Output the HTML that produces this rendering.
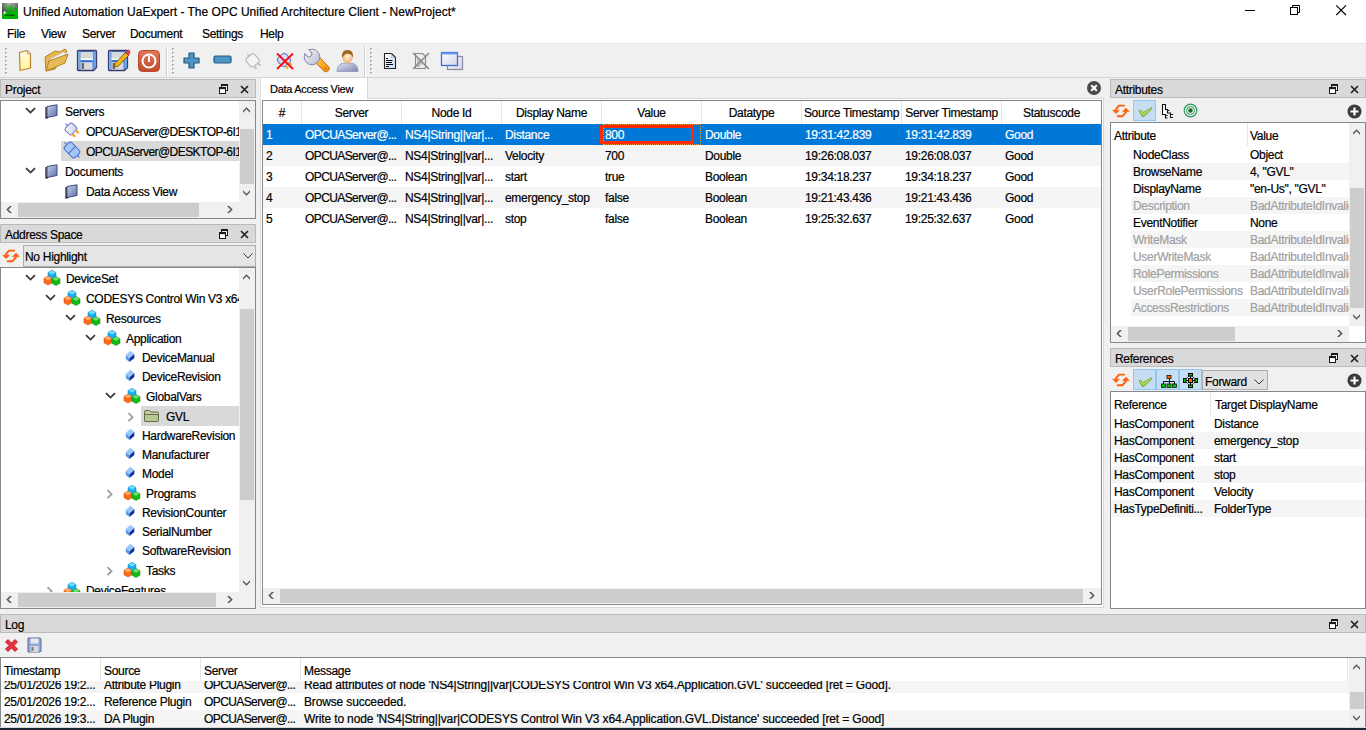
<!DOCTYPE html><html><head><meta charset="utf-8"><style>
*{box-sizing:border-box}
body{margin:0;width:1366px;height:730px;position:relative;overflow:hidden;background:#f0f0f0;font-family:"Liberation Sans",sans-serif;font-size:11px;color:#000}
.a{position:absolute}
.t{position:absolute;white-space:pre;line-height:13px;font-size:12px;letter-spacing:-0.3px;-webkit-text-stroke-width:0.2px}
svg.a{overflow:visible}
</style></head><body>
<div class="a" style="left:0px;top:0px;width:1366px;height:43px;background:#fff"></div>
<div class="a" style="left:0px;top:43px;width:1366px;height:1px;background:#e6e6e6"></div>
<svg class="a" style="left:2px;top:3px;" width="16" height="16" viewBox="0 0 16 16"><defs><radialGradient id="ig" cx="0.5" cy="0.1" r="0.7"><stop offset="0" stop-color="#b8b8b8"/><stop offset="1" stop-color="#4a4a4a"/></radialGradient><radialGradient id="gl" cx="0.5" cy="0.5" r="0.5"><stop offset="0" stop-color="#fff"/><stop offset="1" stop-color="#fff" stop-opacity="0"/></radialGradient></defs><rect x="0" y="0" width="16" height="16" rx="1" fill="#02b402"/><path d="M1 0H15Q16 0 16 1V2.5Q14 8 7 8.5Q2 9 0 12V1Q0 0 1 0Z" fill="url(#ig)"/><path d="M4.2 2.2V6Q4.2 7.6 5.8 7.6Q7.4 7.6 7.4 6V2.2M7.6 7.6L9.6 2.2L11.6 7.6M8.4 5.8H10.8" fill="none" stroke="#0cc00c" stroke-width="1.1"/><circle cx="2.6" cy="9.6" r="2.2" fill="url(#gl)"/><path d="M3 12.3H12.5" stroke="#0a400a" stroke-width="1.4" stroke-dasharray="1.2 0.5"/></svg>
<div class="t" style="left:23px;top:6px;letter-spacing:0">Unified Automation UaExpert - The OPC Unified Architecture Client - NewProject*</div>
<div class="a" style="left:1245px;top:10px;width:10px;height:1px;background:#000"></div>
<svg class="a" style="left:1290px;top:5px;" width="11" height="11" viewBox="0 0 11 11"><rect x="0.5" y="2.5" width="7" height="7" fill="none" stroke="#000"/><path d="M2.5 2.5V0.5H9.5V7.5H7.5" fill="none" stroke="#000"/></svg>
<svg class="a" style="left:1336px;top:5px;" width="11" height="11" viewBox="0 0 11 11"><path d="M0.3 0.3L10 10M10 0.3L0.3 10" stroke="#000" stroke-width="1.1"/></svg>
<div class="t" style="left:7px;top:28px;">File</div>
<div class="t" style="left:41px;top:28px;">View</div>
<div class="t" style="left:82px;top:28px;">Server</div>
<div class="t" style="left:130px;top:28px;">Document</div>
<div class="t" style="left:202px;top:28px;">Settings</div>
<div class="t" style="left:260px;top:28px;">Help</div>
<div class="a" style="left:0px;top:77px;width:1366px;height:1px;background:#d5d5d5"></div>
<div class="a" style="left:5px;top:48px;width:2px;height:2px;background:#a8a8a8"></div>
<div class="a" style="left:6px;top:49px;width:1px;height:1px;background:#fff"></div>
<div class="a" style="left:5px;top:52px;width:2px;height:2px;background:#a8a8a8"></div>
<div class="a" style="left:6px;top:53px;width:1px;height:1px;background:#fff"></div>
<div class="a" style="left:5px;top:56px;width:2px;height:2px;background:#a8a8a8"></div>
<div class="a" style="left:6px;top:57px;width:1px;height:1px;background:#fff"></div>
<div class="a" style="left:5px;top:60px;width:2px;height:2px;background:#a8a8a8"></div>
<div class="a" style="left:6px;top:61px;width:1px;height:1px;background:#fff"></div>
<div class="a" style="left:5px;top:64px;width:2px;height:2px;background:#a8a8a8"></div>
<div class="a" style="left:6px;top:65px;width:1px;height:1px;background:#fff"></div>
<div class="a" style="left:5px;top:68px;width:2px;height:2px;background:#a8a8a8"></div>
<div class="a" style="left:6px;top:69px;width:1px;height:1px;background:#fff"></div>
<div class="a" style="left:5px;top:72px;width:2px;height:2px;background:#a8a8a8"></div>
<div class="a" style="left:6px;top:73px;width:1px;height:1px;background:#fff"></div>
<div class="a" style="left:172px;top:48px;width:2px;height:2px;background:#a8a8a8"></div>
<div class="a" style="left:173px;top:49px;width:1px;height:1px;background:#fff"></div>
<div class="a" style="left:172px;top:52px;width:2px;height:2px;background:#a8a8a8"></div>
<div class="a" style="left:173px;top:53px;width:1px;height:1px;background:#fff"></div>
<div class="a" style="left:172px;top:56px;width:2px;height:2px;background:#a8a8a8"></div>
<div class="a" style="left:173px;top:57px;width:1px;height:1px;background:#fff"></div>
<div class="a" style="left:172px;top:60px;width:2px;height:2px;background:#a8a8a8"></div>
<div class="a" style="left:173px;top:61px;width:1px;height:1px;background:#fff"></div>
<div class="a" style="left:172px;top:64px;width:2px;height:2px;background:#a8a8a8"></div>
<div class="a" style="left:173px;top:65px;width:1px;height:1px;background:#fff"></div>
<div class="a" style="left:172px;top:68px;width:2px;height:2px;background:#a8a8a8"></div>
<div class="a" style="left:173px;top:69px;width:1px;height:1px;background:#fff"></div>
<div class="a" style="left:172px;top:72px;width:2px;height:2px;background:#a8a8a8"></div>
<div class="a" style="left:173px;top:73px;width:1px;height:1px;background:#fff"></div>
<div class="a" style="left:370px;top:48px;width:2px;height:2px;background:#a8a8a8"></div>
<div class="a" style="left:371px;top:49px;width:1px;height:1px;background:#fff"></div>
<div class="a" style="left:370px;top:52px;width:2px;height:2px;background:#a8a8a8"></div>
<div class="a" style="left:371px;top:53px;width:1px;height:1px;background:#fff"></div>
<div class="a" style="left:370px;top:56px;width:2px;height:2px;background:#a8a8a8"></div>
<div class="a" style="left:371px;top:57px;width:1px;height:1px;background:#fff"></div>
<div class="a" style="left:370px;top:60px;width:2px;height:2px;background:#a8a8a8"></div>
<div class="a" style="left:371px;top:61px;width:1px;height:1px;background:#fff"></div>
<div class="a" style="left:370px;top:64px;width:2px;height:2px;background:#a8a8a8"></div>
<div class="a" style="left:371px;top:65px;width:1px;height:1px;background:#fff"></div>
<div class="a" style="left:370px;top:68px;width:2px;height:2px;background:#a8a8a8"></div>
<div class="a" style="left:371px;top:69px;width:1px;height:1px;background:#fff"></div>
<div class="a" style="left:370px;top:72px;width:2px;height:2px;background:#a8a8a8"></div>
<div class="a" style="left:371px;top:73px;width:1px;height:1px;background:#fff"></div>
<div class="a" style="left:166px;top:46px;width:1px;height:31px;background:#d0d0d0"></div>
<div class="a" style="left:167px;top:46px;width:1px;height:31px;background:#fff"></div>
<div class="a" style="left:364px;top:46px;width:1px;height:31px;background:#d0d0d0"></div>
<div class="a" style="left:365px;top:46px;width:1px;height:31px;background:#fff"></div>
<svg class="a" style="left:18px;top:49px;" width="14" height="23" viewBox="0 0 14 23"><defs><linearGradient id="nd" x1="0" y1="0" x2="0" y2="1"><stop offset="0" stop-color="#fffbe0"/><stop offset="1" stop-color="#fff49a"/></linearGradient></defs><path d="M1.5 3.5L9 1.5L12.5 5V19L2 21.5Z" fill="url(#nd)" stroke="#b8862c" stroke-width="1.2" stroke-linejoin="round"/><path d="M9 1.5L9.5 5L12.5 5" fill="#ddd" stroke="#999" stroke-width="0.8"/></svg>
<svg class="a" style="left:43px;top:48px;" width="26" height="25" viewBox="0 0 26 25"><path d="M2 9L12 3L17 4L22 1L24 3L12 21L3 23Z" fill="#e9b64a" stroke="#b5832a" stroke-width="1"/><path d="M7 11L21 4L23 6L11 18Z" fill="#f2f2f6" stroke="#c9c9cf" stroke-width="0.8"/><path d="M3 23L6 13L25 6L22 15Z" fill="#e7bb55" stroke="#b5832a" stroke-width="1" stroke-linejoin="round"/></svg>
<svg class="a" style="left:76px;top:49px;" width="22" height="24" viewBox="0 0 22 24"><defs><linearGradient id="fl" x1="0" y1="0" x2="1" y2="0"><stop offset="0" stop-color="#a8d4ff"/><stop offset="0.25" stop-color="#2a6ac8"/><stop offset="0.75" stop-color="#3a7ad8"/><stop offset="1" stop-color="#8ac0f8"/></linearGradient></defs><path d="M1.5 2.5Q1.5 1.5 2.5 1.5H19.5Q20.5 1.5 20.5 2.5V18.5L17.5 21.5H2.5Q1.5 21.5 1.5 20.5Z" fill="url(#fl)" stroke="#3c3c6e" stroke-width="1.3"/><rect x="4.5" y="3" width="12.5" height="7" fill="#d8d8d8"/><rect x="4.5" y="9.5" width="12.5" height="1.6" fill="#fff"/><rect x="4.5" y="13.2" width="12" height="7.5" fill="#dadada"/><rect x="5.6" y="14" width="2.4" height="6" fill="#6a6a6a"/></svg>
<svg class="a" style="left:107px;top:49px;" width="24" height="24" viewBox="0 0 24 24"><path d="M1.5 2.5Q1.5 1.5 2.5 1.5H19.5Q20.5 1.5 20.5 2.5V18.5L17.5 21.5H2.5Q1.5 21.5 1.5 20.5Z" fill="url(#fl)" stroke="#3c3c6e" stroke-width="1.3"/><rect x="4.5" y="3" width="12.5" height="7" fill="#d8d8d8"/><rect x="4.5" y="9.5" width="12.5" height="1.6" fill="#fff"/><rect x="4.5" y="13.2" width="12" height="7.5" fill="#dadada"/><rect x="5.6" y="14" width="2.4" height="6" fill="#6a6a6a"/><path d="M8 14.5L18.5 3.5L21.5 6.5L11 17.5L7.5 18Z" fill="#f2b418" stroke="#6a5010" stroke-width="0.8" stroke-linejoin="round"/><path d="M18.5 3.5L20.2 1.3Q21.3 0.6 22.5 1.6Q23.4 2.7 22.8 3.8L21.5 6.5Z" fill="#e84850" stroke="#8a2020" stroke-width="0.6"/></svg>
<svg class="a" style="left:138px;top:50px;" width="22" height="22" viewBox="0 0 22 22"><defs><linearGradient id="pw" x1="0" y1="0" x2="0" y2="1"><stop offset="0" stop-color="#e07a5a"/><stop offset="1" stop-color="#c04a2a"/></linearGradient></defs><rect x="0.5" y="0.5" width="21" height="21" rx="4" fill="url(#pw)" stroke="#b84a2a"/><circle cx="11" cy="11" r="6.5" fill="none" stroke="#fff" stroke-width="2"/><path d="M11 6V12" stroke="#fff" stroke-width="2"/></svg>
<svg class="a" style="left:183px;top:52px;" width="18" height="18" viewBox="0 0 18 18"><path d="M6 1H11V6H16V11H11V16H6V11H1V6H6Z" fill="#4f95c4" stroke="#1f5a85" stroke-width="1.2" stroke-linejoin="round"/></svg>
<svg class="a" style="left:213px;top:55px;" width="19" height="10" viewBox="0 0 19 10"><rect x="1" y="1" width="17" height="7" rx="1.5" fill="#4f95c4" stroke="#1f5a85" stroke-width="1.2"/></svg>
<svg class="a" style="left:245px;top:52px;" width="17" height="18" viewBox="0 0 17 18"><g transform="rotate(-40 8 8)"><rect x="2" y="2.5" width="11" height="11" rx="3" fill="#f4f4f4" stroke="#b8b8b8" stroke-width="1.2"/><path d="M5 13.5V17M10 13.5V17" stroke="#c0c0c0" stroke-width="2"/><path d="M7.5 2.5V0" stroke="#b8b8b8" stroke-width="1.2"/></g></svg>
<svg class="a" style="left:276px;top:52px;" width="18" height="18" viewBox="0 0 18 18"><g transform="rotate(-40 8 8)"><rect x="2.5" y="2.5" width="11" height="11" rx="3" fill="#d4dcfa" stroke="#6f80d0" stroke-width="1.1"/><path d="M5.5 13.5V17M10.5 13.5V17" stroke="#f0a828" stroke-width="2"/></g><path d="M1 1.5L17 17M17 1.5L1 17" stroke="#ff0a0a" stroke-width="1.8"/></svg>
<svg class="a" style="left:303px;top:48px;" width="27" height="26" viewBox="0 0 27 26"><defs><linearGradient id="wh" x1="0" y1="0" x2="1" y2="1"><stop offset="0" stop-color="#fafafe"/><stop offset="1" stop-color="#b8b8cc"/></linearGradient><linearGradient id="wo" x1="0" y1="0" x2="1" y2="1"><stop offset="0" stop-color="#ffd040"/><stop offset="1" stop-color="#f08a10"/></linearGradient></defs><path d="M11.5 13.5L21 23A3.2 3.2 0 0 0 25.5 18.5L16 9Z" fill="url(#wo)" stroke="#c87010" stroke-width="1"/><circle cx="22.3" cy="20.3" r="1.2" fill="#e07a10"/><circle cx="9" cy="9" r="7.8" fill="url(#wh)" stroke="#8a8aaa" stroke-width="1"/><g transform="rotate(-45 9 9)"><rect x="6.2" y="-2" width="5.6" height="9.5" rx="2.5" fill="#f0f0f0" stroke="#8a8aaa" stroke-width="1"/><rect x="5" y="-3" width="8" height="4" fill="#f0f0f0"/></g></svg>
<svg class="a" style="left:336px;top:49px;" width="23" height="24" viewBox="0 0 23 24"><defs><linearGradient id="ps" x1="0" y1="0" x2="1" y2="1"><stop offset="0" stop-color="#e4e6f4"/><stop offset="1" stop-color="#7c84b0"/></linearGradient><radialGradient id="fc" cx="0.5" cy="0.4" r="0.6"><stop offset="0" stop-color="#fff0d8"/><stop offset="1" stop-color="#f0b070"/></radialGradient></defs><path d="M1 22.5Q1 16 6 14.5L11.5 14L17 14.5Q22 16 22 22.5Z" fill="url(#ps)" stroke="#9096bc" stroke-width="0.8"/><ellipse cx="11.5" cy="8.5" rx="5" ry="6" fill="url(#fc)"/><path d="M6.2 9Q5 1 11.5 1Q18 1 16.8 9Q16 4.5 11 4.8Q8.5 5 6.2 9Z" fill="#a0681a"/></svg>
<svg class="a" style="left:383px;top:52px;" width="14" height="18" viewBox="0 0 14 18"><defs><linearGradient id="dc" x1="0" y1="0" x2="1" y2="1"><stop offset="0" stop-color="#ffffff"/><stop offset="1" stop-color="#c4d8ff"/></linearGradient></defs><path d="M1.5 1.5H8.5L12.5 5.5V16.5H1.5Z" fill="url(#dc)" stroke="#222" stroke-width="1.1" stroke-linejoin="round"/><path d="M8.5 1.5V5.5H12.5" fill="none" stroke="#9ab" stroke-width="0.6"/><path d="M3 6.5H5M3 8.5H9.5M3 10.5H9M3 12.5H10M3 14.5H6" stroke="#000" stroke-width="1"/></svg>
<svg class="a" style="left:412px;top:52px;" width="18" height="18" viewBox="0 0 18 18"><path d="M3.5 1.5H10.5L13.5 4.5V16.5H3.5Z" fill="#ececec" stroke="#8a8a8a" stroke-width="1.1"/><path d="M5 8H9M5 10H11M5 12H10M5 14H8" stroke="#999" stroke-width="1"/><path d="M1 1L17 17M17 1L1 17" stroke="#8c8c8c" stroke-width="1.7"/></svg>
<svg class="a" style="left:440px;top:51px;" width="24" height="21" viewBox="0 0 24 21"><defs><linearGradient id="wf" x1="0" y1="0" x2="1" y2="1"><stop offset="0" stop-color="#ffffff"/><stop offset="1" stop-color="#d4d6e4"/></linearGradient></defs><rect x="7.5" y="5.5" width="15" height="13" fill="url(#wf)" stroke="#8a8aa6" stroke-width="1.2"/><rect x="1.5" y="1.5" width="16" height="13" fill="url(#wf)" stroke="#3a72e0" stroke-width="1.3"/><rect x="1.5" y="1.5" width="16" height="2" fill="#6a9af0"/></svg>
<div class="a" style="left:0px;top:79px;width:1366px;height:1px;background:#f0f0f0"></div>
<div class="a" style="left:0px;top:79px;width:256px;height:19px;background:#d9d9d9;border:1px solid #bababa"></div>
<div class="t" style="left:5px;top:84px;">Project</div>
<svg class="a" style="left:219px;top:84px;" width="9" height="10" viewBox="0 0 9 10"><rect x="2.5" y="0.5" width="6" height="6" fill="#fff" stroke="#1a1a1a"/><rect x="2.5" y="0.5" width="6" height="1.6" fill="#1a1a1a"/><rect x="0.5" y="3.5" width="6" height="6" fill="#fff" stroke="#1a1a1a"/><rect x="0.5" y="3.5" width="6" height="1.6" fill="#1a1a1a"/></svg>
<svg class="a" style="left:240px;top:85px;" width="9" height="9" viewBox="0 0 9 9"><path d="M1 1L8 8M8 1L1 8" stroke="#222" stroke-width="1.7"/></svg>
<div class="a" style="left:0px;top:100px;width:256px;height:119px;background:#fff;border:1px solid #828790"></div>
<div class="a" style="left:239px;top:101px;width:16px;height:101px;background:#f0f0f0"></div>
<div class="a" style="left:240px;top:129px;width:14px;height:55px;background:#cdcdcd"></div>
<svg class="a" style="left:243px;top:107px;" width="7" height="7" viewBox="0 0 7 7"><path d="M0 3.7L3.5 0.2L7 3.7V5.8L3.5 2.3L0 5.8Z" fill="#5a5a5a"/></svg>
<svg class="a" style="left:243px;top:190px;" width="7" height="7" viewBox="0 0 7 7"><path d="M0 0.2L3.5 3.7L7 0.2V2.3L3.5 5.8L0 2.3Z" fill="#5a5a5a"/></svg>
<div class="a" style="left:1px;top:202px;width:238px;height:16px;background:#f0f0f0"></div>
<div class="a" style="left:18px;top:203px;width:181px;height:14px;background:#cdcdcd"></div>
<svg class="a" style="left:6px;top:206px;" width="7" height="7" viewBox="0 0 7 7"><path d="M3.8 0L0.3 3.5L3.8 7H6L2.5 3.5L6 0Z" fill="#5a5a5a"/></svg>
<svg class="a" style="left:227px;top:206px;" width="7" height="7" viewBox="0 0 7 7"><path d="M2.2 0L5.7 3.5L2.2 7H0L3.5 3.5L0 0Z" fill="#5a5a5a"/></svg>
<div class="a" style="left:239px;top:202px;width:16px;height:16px;background:#f0f0f0"></div>
<div class="a" style="left:1px;top:101px;width:238px;height:101px;overflow:hidden">
<svg class="a" style="left:24px;top:6px;" width="11" height="8" viewBox="0 0 11 8"><path d="M1 1.2L5.5 5.6L10 1.2" fill="none" stroke="#3a3a3a" stroke-width="1.8"/></svg>
<svg class="a" style="left:44px;top:3px;" width="14" height="15" viewBox="0 0 14 15"><defs><linearGradient id="bk" x1="0" y1="0" x2="1" y2="1"><stop offset="0" stop-color="#c9d3ee"/><stop offset="1" stop-color="#5a6ea8"/></linearGradient></defs><path d="M2 2.5L12 0.8V11.5L2 13.5Z" fill="url(#bk)" stroke="#3d4d7a" stroke-width="1"/><path d="M1 3V14L3 13.5" fill="none" stroke="#1c2440" stroke-width="1.3"/></svg>
<div class="t" style="left:64px;top:5px;">Servers</div>
<svg class="a" style="left:63px;top:21px;" width="17" height="17" viewBox="0 0 17 17"><defs><linearGradient id="sv1" x1="0" y1="0" x2="1" y2="1"><stop offset="0" stop-color="#ffffff"/><stop offset="1" stop-color="#c8ccf4"/></linearGradient></defs><g transform="rotate(-45 8 8)"><path d="M8 2V-1" stroke="#6a70c8" stroke-width="1.2"/><rect x="3" y="2" width="10" height="9" rx="2" fill="url(#sv1)" stroke="#6a70c8" stroke-width="1"/><path d="M5.5 11V15M10.5 11V15" stroke="#f5a020" stroke-width="2.2"/></g></svg>
<div class="t" style="left:85px;top:25px;letter-spacing:-0.55px">OPCUAServer@DESKTOP-6I1GS</div>
<div class="a" style="left:60px;top:40px;width:178px;height:20px;background:#d9d9d9"></div>
<svg class="a" style="left:63px;top:41px;" width="17" height="17" viewBox="0 0 17 17"><g transform="rotate(-45 8 8)"><path d="M8 0.5V-2.5M8 15.5V18.5" stroke="#4a6ad0" stroke-width="1.2"/><rect x="3" y="0.5" width="10" height="15" rx="2.5" fill="#a4c8f4" stroke="#4a6ad0" stroke-width="1"/><path d="M3 8H13" stroke="#4a6ad0" stroke-width="1"/></g></svg>
<div class="t" style="left:85px;top:45px;letter-spacing:-0.55px">OPCUAServer@DESKTOP-6I1GS</div>
<svg class="a" style="left:24px;top:66px;" width="11" height="8" viewBox="0 0 11 8"><path d="M1 1.2L5.5 5.6L10 1.2" fill="none" stroke="#3a3a3a" stroke-width="1.8"/></svg>
<svg class="a" style="left:44px;top:63px;" width="14" height="15" viewBox="0 0 14 15"><defs><linearGradient id="bk" x1="0" y1="0" x2="1" y2="1"><stop offset="0" stop-color="#c9d3ee"/><stop offset="1" stop-color="#5a6ea8"/></linearGradient></defs><path d="M2 2.5L12 0.8V11.5L2 13.5Z" fill="url(#bk)" stroke="#3d4d7a" stroke-width="1"/><path d="M1 3V14L3 13.5" fill="none" stroke="#1c2440" stroke-width="1.3"/></svg>
<div class="t" style="left:64px;top:65px;">Documents</div>
<svg class="a" style="left:64px;top:83px;" width="14" height="15" viewBox="0 0 14 15"><defs><linearGradient id="bk" x1="0" y1="0" x2="1" y2="1"><stop offset="0" stop-color="#c9d3ee"/><stop offset="1" stop-color="#5a6ea8"/></linearGradient></defs><path d="M2 2.5L12 0.8V11.5L2 13.5Z" fill="url(#bk)" stroke="#3d4d7a" stroke-width="1"/><path d="M1 3V14L3 13.5" fill="none" stroke="#1c2440" stroke-width="1.3"/></svg>
<div class="t" style="left:85px;top:85px;">Data Access View</div>
</div>
<div class="a" style="left:0px;top:224px;width:256px;height:19px;background:#d9d9d9;border:1px solid #bababa"></div>
<div class="t" style="left:5px;top:229px;">Address Space</div>
<svg class="a" style="left:219px;top:229px;" width="9" height="10" viewBox="0 0 9 10"><rect x="2.5" y="0.5" width="6" height="6" fill="#fff" stroke="#1a1a1a"/><rect x="2.5" y="0.5" width="6" height="1.6" fill="#1a1a1a"/><rect x="0.5" y="3.5" width="6" height="6" fill="#fff" stroke="#1a1a1a"/><rect x="0.5" y="3.5" width="6" height="1.6" fill="#1a1a1a"/></svg>
<svg class="a" style="left:240px;top:230px;" width="9" height="9" viewBox="0 0 9 9"><path d="M1 1L8 8M8 1L1 8" stroke="#222" stroke-width="1.7"/></svg>
<svg class="a" style="left:2px;top:249px;" width="18" height="14" viewBox="0 0 18 14"><path d="M12.2 1.6H7L3.8 5.4M5.7 12.2H10.6L14 8.2" fill="none" stroke="#ff5f0a" stroke-width="1.9" stroke-linecap="round" stroke-linejoin="round"/><path d="M0.8 6.3H7.2L4.1 9.6Z M10.7 7.6H17.1L14 4.2Z" fill="#ff5f0a" stroke="#ff5f0a" stroke-width="0.8" stroke-linejoin="round"/></svg>
<div class="a" style="left:23px;top:245px;width:233px;height:22px;background:#e5e5e5;border:1px solid #adadad"></div>
<div class="t" style="left:25px;top:251px;">No Highlight</div>
<svg class="a" style="left:243px;top:253px;" width="10" height="6" viewBox="0 0 10 6"><path d="M0.5 0.5L5 5L9.5 0.5" fill="none" stroke="#333" stroke-width="1"/></svg>
<div class="a" style="left:0px;top:267px;width:256px;height:342px;background:#fff;border:1px solid #828790"></div>
<div class="a" style="left:239px;top:268px;width:16px;height:324px;background:#f0f0f0"></div>
<div class="a" style="left:240px;top:309px;width:14px;height:191px;background:#cdcdcd"></div>
<svg class="a" style="left:243px;top:274px;" width="7" height="7" viewBox="0 0 7 7"><path d="M0 3.7L3.5 0.2L7 3.7V5.8L3.5 2.3L0 5.8Z" fill="#5a5a5a"/></svg>
<svg class="a" style="left:243px;top:580px;" width="7" height="7" viewBox="0 0 7 7"><path d="M0 0.2L3.5 3.7L7 0.2V2.3L3.5 5.8L0 2.3Z" fill="#5a5a5a"/></svg>
<div class="a" style="left:1px;top:592px;width:238px;height:16px;background:#f0f0f0"></div>
<div class="a" style="left:18px;top:593px;width:198px;height:14px;background:#cdcdcd"></div>
<svg class="a" style="left:6px;top:596px;" width="7" height="7" viewBox="0 0 7 7"><path d="M3.8 0L0.3 3.5L3.8 7H6L2.5 3.5L6 0Z" fill="#5a5a5a"/></svg>
<svg class="a" style="left:227px;top:596px;" width="7" height="7" viewBox="0 0 7 7"><path d="M2.2 0L5.7 3.5L2.2 7H0L3.5 3.5L0 0Z" fill="#5a5a5a"/></svg>
<div class="a" style="left:239px;top:592px;width:16px;height:16px;background:#f0f0f0"></div>
<div class="a" style="left:1px;top:268px;width:238px;height:324px;overflow:hidden">
<svg class="a" style="left:24px;top:6px;" width="11" height="8" viewBox="0 0 11 8"><path d="M1 1.2L5.5 5.6L10 1.2" fill="none" stroke="#3a3a3a" stroke-width="1.8"/></svg>
<svg class="a" style="left:43px;top:2px;" width="17" height="17" viewBox="0 0 17 17"><path d="M8 0.3L12 2.5V7.1L8 9.3L4 7.1V2.5Z" fill="#18b0f4" stroke="#0a78c0" stroke-width="0.5" stroke-linejoin="round"/><path d="M8 0.6L11.6 2.5L8 4.5L4.4 2.5Z" fill="#70dcff"/><path d="M4 6L8 8.2V12.8L4 15L0 12.8V8.2Z" fill="#ff6a18" stroke="#c04808" stroke-width="0.5" stroke-linejoin="round"/><path d="M4 6.3L7.6 8.2L4 10.2L0.4 8.2Z" fill="#ffb070"/><path d="M12 6.5L16 8.7V13.3L12 15.5L8 13.3V8.7Z" fill="#12bc12" stroke="#088008" stroke-width="0.5" stroke-linejoin="round"/><path d="M12 6.8L15.6 8.7L12 10.7L8.4 8.7Z" fill="#70e070"/></svg>
<div class="t" style="left:65px;top:5px;">DeviceSet</div>
<svg class="a" style="left:44px;top:26px;" width="11" height="8" viewBox="0 0 11 8"><path d="M1 1.2L5.5 5.6L10 1.2" fill="none" stroke="#3a3a3a" stroke-width="1.8"/></svg>
<svg class="a" style="left:63px;top:22px;" width="17" height="17" viewBox="0 0 17 17"><path d="M8 0.3L12 2.5V7.1L8 9.3L4 7.1V2.5Z" fill="#18b0f4" stroke="#0a78c0" stroke-width="0.5" stroke-linejoin="round"/><path d="M8 0.6L11.6 2.5L8 4.5L4.4 2.5Z" fill="#70dcff"/><path d="M4 6L8 8.2V12.8L4 15L0 12.8V8.2Z" fill="#ff6a18" stroke="#c04808" stroke-width="0.5" stroke-linejoin="round"/><path d="M4 6.3L7.6 8.2L4 10.2L0.4 8.2Z" fill="#ffb070"/><path d="M12 6.5L16 8.7V13.3L12 15.5L8 13.3V8.7Z" fill="#12bc12" stroke="#088008" stroke-width="0.5" stroke-linejoin="round"/><path d="M12 6.8L15.6 8.7L12 10.7L8.4 8.7Z" fill="#70e070"/></svg>
<div class="t" style="left:85px;top:25px;">CODESYS Control Win V3 x64</div>
<svg class="a" style="left:64px;top:46px;" width="11" height="8" viewBox="0 0 11 8"><path d="M1 1.2L5.5 5.6L10 1.2" fill="none" stroke="#3a3a3a" stroke-width="1.8"/></svg>
<svg class="a" style="left:83px;top:42px;" width="17" height="17" viewBox="0 0 17 17"><path d="M8 0.3L12 2.5V7.1L8 9.3L4 7.1V2.5Z" fill="#18b0f4" stroke="#0a78c0" stroke-width="0.5" stroke-linejoin="round"/><path d="M8 0.6L11.6 2.5L8 4.5L4.4 2.5Z" fill="#70dcff"/><path d="M4 6L8 8.2V12.8L4 15L0 12.8V8.2Z" fill="#ff6a18" stroke="#c04808" stroke-width="0.5" stroke-linejoin="round"/><path d="M4 6.3L7.6 8.2L4 10.2L0.4 8.2Z" fill="#ffb070"/><path d="M12 6.5L16 8.7V13.3L12 15.5L8 13.3V8.7Z" fill="#12bc12" stroke="#088008" stroke-width="0.5" stroke-linejoin="round"/><path d="M12 6.8L15.6 8.7L12 10.7L8.4 8.7Z" fill="#70e070"/></svg>
<div class="t" style="left:105px;top:45px;">Resources</div>
<svg class="a" style="left:84px;top:66px;" width="11" height="8" viewBox="0 0 11 8"><path d="M1 1.2L5.5 5.6L10 1.2" fill="none" stroke="#3a3a3a" stroke-width="1.8"/></svg>
<svg class="a" style="left:103px;top:62px;" width="17" height="17" viewBox="0 0 17 17"><path d="M8 0.3L12 2.5V7.1L8 9.3L4 7.1V2.5Z" fill="#18b0f4" stroke="#0a78c0" stroke-width="0.5" stroke-linejoin="round"/><path d="M8 0.6L11.6 2.5L8 4.5L4.4 2.5Z" fill="#70dcff"/><path d="M4 6L8 8.2V12.8L4 15L0 12.8V8.2Z" fill="#ff6a18" stroke="#c04808" stroke-width="0.5" stroke-linejoin="round"/><path d="M4 6.3L7.6 8.2L4 10.2L0.4 8.2Z" fill="#ffb070"/><path d="M12 6.5L16 8.7V13.3L12 15.5L8 13.3V8.7Z" fill="#12bc12" stroke="#088008" stroke-width="0.5" stroke-linejoin="round"/><path d="M12 6.8L15.6 8.7L12 10.7L8.4 8.7Z" fill="#70e070"/></svg>
<div class="t" style="left:125px;top:65px;">Application</div>
<svg class="a" style="left:124px;top:82px;" width="11" height="14" viewBox="0 0 11 14"><path d="M5.4 0.8L9.3 4L4.4 8.5L0.8 5Z" fill="#98c8fc"/><path d="M0.8 5L4.4 8.5V12.1L0.8 9Z" fill="#5898e6"/><path d="M4.4 8.5L9.3 4V8L4.4 12.1Z" fill="#0c2c9c"/></svg>
<div class="t" style="left:141px;top:84px;">DeviceManual</div>
<svg class="a" style="left:124px;top:101px;" width="11" height="14" viewBox="0 0 11 14"><path d="M5.4 0.8L9.3 4L4.4 8.5L0.8 5Z" fill="#98c8fc"/><path d="M0.8 5L4.4 8.5V12.1L0.8 9Z" fill="#5898e6"/><path d="M4.4 8.5L9.3 4V8L4.4 12.1Z" fill="#0c2c9c"/></svg>
<div class="t" style="left:141px;top:103px;">DeviceRevision</div>
<svg class="a" style="left:104px;top:124px;" width="11" height="8" viewBox="0 0 11 8"><path d="M1 1.2L5.5 5.6L10 1.2" fill="none" stroke="#3a3a3a" stroke-width="1.8"/></svg>
<svg class="a" style="left:123px;top:120px;" width="17" height="17" viewBox="0 0 17 17"><path d="M8 0.3L12 2.5V7.1L8 9.3L4 7.1V2.5Z" fill="#18b0f4" stroke="#0a78c0" stroke-width="0.5" stroke-linejoin="round"/><path d="M8 0.6L11.6 2.5L8 4.5L4.4 2.5Z" fill="#70dcff"/><path d="M4 6L8 8.2V12.8L4 15L0 12.8V8.2Z" fill="#ff6a18" stroke="#c04808" stroke-width="0.5" stroke-linejoin="round"/><path d="M4 6.3L7.6 8.2L4 10.2L0.4 8.2Z" fill="#ffb070"/><path d="M12 6.5L16 8.7V13.3L12 15.5L8 13.3V8.7Z" fill="#12bc12" stroke="#088008" stroke-width="0.5" stroke-linejoin="round"/><path d="M12 6.8L15.6 8.7L12 10.7L8.4 8.7Z" fill="#70e070"/></svg>
<div class="t" style="left:145px;top:123px;">GlobalVars</div>
<div class="a" style="left:140px;top:138px;width:98px;height:20px;background:#d9d9d9"></div>
<svg class="a" style="left:126px;top:144px;" width="8" height="11" viewBox="0 0 8 11"><path d="M1.5 1.2L5.6 5.2L1.5 9.2" fill="none" stroke="#9c9c9c" stroke-width="1.8"/></svg>
<svg class="a" style="left:142px;top:141px;" width="17" height="14" viewBox="0 0 17 14"><path d="M1.5 3Q1.5 1.5 3 1.5H6.5L8 3H14Q15.5 3 15.5 4.5V11.5Q15.5 12.5 14.5 12.5H2.5Q1.5 12.5 1.5 11.5Z" fill="#c8cca0" stroke="#66684a" stroke-width="1"/><path d="M1.5 5.5H15.5V11.5Q15.5 12.5 14.5 12.5H2.5Q1.5 12.5 1.5 11.5Z" fill="#b6c890" stroke="#66684a" stroke-width="1"/></svg>
<div class="t" style="left:165px;top:143px;">GVL</div>
<svg class="a" style="left:124px;top:160px;" width="11" height="14" viewBox="0 0 11 14"><path d="M5.4 0.8L9.3 4L4.4 8.5L0.8 5Z" fill="#98c8fc"/><path d="M0.8 5L4.4 8.5V12.1L0.8 9Z" fill="#5898e6"/><path d="M4.4 8.5L9.3 4V8L4.4 12.1Z" fill="#0c2c9c"/></svg>
<div class="t" style="left:141px;top:162px;">HardwareRevision</div>
<svg class="a" style="left:124px;top:179px;" width="11" height="14" viewBox="0 0 11 14"><path d="M5.4 0.8L9.3 4L4.4 8.5L0.8 5Z" fill="#98c8fc"/><path d="M0.8 5L4.4 8.5V12.1L0.8 9Z" fill="#5898e6"/><path d="M4.4 8.5L9.3 4V8L4.4 12.1Z" fill="#0c2c9c"/></svg>
<div class="t" style="left:141px;top:181px;">Manufacturer</div>
<svg class="a" style="left:124px;top:198px;" width="11" height="14" viewBox="0 0 11 14"><path d="M5.4 0.8L9.3 4L4.4 8.5L0.8 5Z" fill="#98c8fc"/><path d="M0.8 5L4.4 8.5V12.1L0.8 9Z" fill="#5898e6"/><path d="M4.4 8.5L9.3 4V8L4.4 12.1Z" fill="#0c2c9c"/></svg>
<div class="t" style="left:141px;top:200px;">Model</div>
<svg class="a" style="left:105px;top:221px;" width="8" height="11" viewBox="0 0 8 11"><path d="M1.5 1.2L5.6 5.2L1.5 9.2" fill="none" stroke="#9c9c9c" stroke-width="1.8"/></svg>
<svg class="a" style="left:123px;top:217px;" width="17" height="17" viewBox="0 0 17 17"><path d="M8 0.3L12 2.5V7.1L8 9.3L4 7.1V2.5Z" fill="#18b0f4" stroke="#0a78c0" stroke-width="0.5" stroke-linejoin="round"/><path d="M8 0.6L11.6 2.5L8 4.5L4.4 2.5Z" fill="#70dcff"/><path d="M4 6L8 8.2V12.8L4 15L0 12.8V8.2Z" fill="#ff6a18" stroke="#c04808" stroke-width="0.5" stroke-linejoin="round"/><path d="M4 6.3L7.6 8.2L4 10.2L0.4 8.2Z" fill="#ffb070"/><path d="M12 6.5L16 8.7V13.3L12 15.5L8 13.3V8.7Z" fill="#12bc12" stroke="#088008" stroke-width="0.5" stroke-linejoin="round"/><path d="M12 6.8L15.6 8.7L12 10.7L8.4 8.7Z" fill="#70e070"/></svg>
<div class="t" style="left:145px;top:220px;">Programs</div>
<svg class="a" style="left:124px;top:237px;" width="11" height="14" viewBox="0 0 11 14"><path d="M5.4 0.8L9.3 4L4.4 8.5L0.8 5Z" fill="#98c8fc"/><path d="M0.8 5L4.4 8.5V12.1L0.8 9Z" fill="#5898e6"/><path d="M4.4 8.5L9.3 4V8L4.4 12.1Z" fill="#0c2c9c"/></svg>
<div class="t" style="left:141px;top:239px;">RevisionCounter</div>
<svg class="a" style="left:124px;top:256px;" width="11" height="14" viewBox="0 0 11 14"><path d="M5.4 0.8L9.3 4L4.4 8.5L0.8 5Z" fill="#98c8fc"/><path d="M0.8 5L4.4 8.5V12.1L0.8 9Z" fill="#5898e6"/><path d="M4.4 8.5L9.3 4V8L4.4 12.1Z" fill="#0c2c9c"/></svg>
<div class="t" style="left:141px;top:258px;">SerialNumber</div>
<svg class="a" style="left:124px;top:275px;" width="11" height="14" viewBox="0 0 11 14"><path d="M5.4 0.8L9.3 4L4.4 8.5L0.8 5Z" fill="#98c8fc"/><path d="M0.8 5L4.4 8.5V12.1L0.8 9Z" fill="#5898e6"/><path d="M4.4 8.5L9.3 4V8L4.4 12.1Z" fill="#0c2c9c"/></svg>
<div class="t" style="left:141px;top:277px;">SoftwareRevision</div>
<svg class="a" style="left:105px;top:298px;" width="8" height="11" viewBox="0 0 8 11"><path d="M1.5 1.2L5.6 5.2L1.5 9.2" fill="none" stroke="#9c9c9c" stroke-width="1.8"/></svg>
<svg class="a" style="left:123px;top:294px;" width="17" height="17" viewBox="0 0 17 17"><path d="M8 0.3L12 2.5V7.1L8 9.3L4 7.1V2.5Z" fill="#18b0f4" stroke="#0a78c0" stroke-width="0.5" stroke-linejoin="round"/><path d="M8 0.6L11.6 2.5L8 4.5L4.4 2.5Z" fill="#70dcff"/><path d="M4 6L8 8.2V12.8L4 15L0 12.8V8.2Z" fill="#ff6a18" stroke="#c04808" stroke-width="0.5" stroke-linejoin="round"/><path d="M4 6.3L7.6 8.2L4 10.2L0.4 8.2Z" fill="#ffb070"/><path d="M12 6.5L16 8.7V13.3L12 15.5L8 13.3V8.7Z" fill="#12bc12" stroke="#088008" stroke-width="0.5" stroke-linejoin="round"/><path d="M12 6.8L15.6 8.7L12 10.7L8.4 8.7Z" fill="#70e070"/></svg>
<div class="t" style="left:145px;top:297px;">Tasks</div>
<svg class="a" style="left:45px;top:318px;" width="8" height="11" viewBox="0 0 8 11"><path d="M1.5 1.2L5.6 5.2L1.5 9.2" fill="none" stroke="#9c9c9c" stroke-width="1.8"/></svg>
<svg class="a" style="left:63px;top:314px;" width="17" height="17" viewBox="0 0 17 17"><path d="M8 0.3L12 2.5V7.1L8 9.3L4 7.1V2.5Z" fill="#18b0f4" stroke="#0a78c0" stroke-width="0.5" stroke-linejoin="round"/><path d="M8 0.6L11.6 2.5L8 4.5L4.4 2.5Z" fill="#70dcff"/><path d="M4 6L8 8.2V12.8L4 15L0 12.8V8.2Z" fill="#ff6a18" stroke="#c04808" stroke-width="0.5" stroke-linejoin="round"/><path d="M4 6.3L7.6 8.2L4 10.2L0.4 8.2Z" fill="#ffb070"/><path d="M12 6.5L16 8.7V13.3L12 15.5L8 13.3V8.7Z" fill="#12bc12" stroke="#088008" stroke-width="0.5" stroke-linejoin="round"/><path d="M12 6.8L15.6 8.7L12 10.7L8.4 8.7Z" fill="#70e070"/></svg>
<div class="t" style="left:85px;top:317px;">DeviceFeatures</div>
</div>
<div class="a" style="left:256px;top:78px;width:848px;height:530px;background:#f0f0f0"></div>
<div class="a" style="left:260px;top:98px;width:844px;height:510px;background:#fff;border:1px solid #d9d9d9"></div>
<div class="a" style="left:367px;top:78px;width:737px;height:21px;background:#f0f0f0;border-left:1px solid #d9d9d9;border-bottom:1px solid #d9d9d9"></div>
<div class="a" style="left:261px;top:78px;width:106px;height:21px;background:#fff"></div>
<div class="a" style="left:260px;top:78px;width:1px;height:21px;background:#e0e0e0"></div>
<div class="t" style="left:270px;top:83px;font-size:11px">Data Access View</div>
<svg class="a" style="left:1087px;top:81px;" width="14" height="14" viewBox="0 0 14 14"><circle cx="7" cy="7" r="7" fill="#4a4a4a"/><path d="M4.2 4.2L9.8 9.8M9.8 4.2L4.2 9.8" stroke="#fff" stroke-width="2"/></svg>
<div class="a" style="left:262px;top:100px;width:840px;height:505px;background:#fff;border:1px solid #828790"></div>
<div class="a" style="left:263px;top:101px;width:38px;height:23px;overflow:hidden"><div class="t" style="left:-100px;right:-100px;top:6px;text-align:center">#</div></div>
<div class="a" style="left:301px;top:101px;width:1px;height:23px;background:#e5e5e5"></div>
<div class="a" style="left:302px;top:101px;width:99px;height:23px;overflow:hidden"><div class="t" style="left:-100px;right:-100px;top:6px;text-align:center">Server</div></div>
<div class="a" style="left:401px;top:101px;width:1px;height:23px;background:#e5e5e5"></div>
<div class="a" style="left:402px;top:101px;width:99px;height:23px;overflow:hidden"><div class="t" style="left:-100px;right:-100px;top:6px;text-align:center">Node Id</div></div>
<div class="a" style="left:501px;top:101px;width:1px;height:23px;background:#e5e5e5"></div>
<div class="a" style="left:502px;top:101px;width:99px;height:23px;overflow:hidden"><div class="t" style="left:-100px;right:-100px;top:6px;text-align:center">Display Name</div></div>
<div class="a" style="left:601px;top:101px;width:1px;height:23px;background:#e5e5e5"></div>
<div class="a" style="left:602px;top:101px;width:99px;height:23px;overflow:hidden"><div class="t" style="left:-100px;right:-100px;top:6px;text-align:center">Value</div></div>
<div class="a" style="left:701px;top:101px;width:1px;height:23px;background:#e5e5e5"></div>
<div class="a" style="left:702px;top:101px;width:99px;height:23px;overflow:hidden"><div class="t" style="left:-100px;right:-100px;top:6px;text-align:center">Datatype</div></div>
<div class="a" style="left:801px;top:101px;width:1px;height:23px;background:#e5e5e5"></div>
<div class="a" style="left:802px;top:101px;width:99px;height:23px;overflow:hidden"><div class="t" style="left:-100px;right:-100px;top:6px;text-align:center">Source Timestamp</div></div>
<div class="a" style="left:901px;top:101px;width:1px;height:23px;background:#e5e5e5"></div>
<div class="a" style="left:902px;top:101px;width:99px;height:23px;overflow:hidden"><div class="t" style="left:-100px;right:-100px;top:6px;text-align:center">Server Timestamp</div></div>
<div class="a" style="left:1001px;top:101px;width:1px;height:23px;background:#e5e5e5"></div>
<div class="a" style="left:1002px;top:101px;width:99px;height:23px;overflow:hidden"><div class="t" style="left:-100px;right:-100px;top:6px;text-align:center">Statuscode</div></div>
<div class="a" style="left:263px;top:124px;width:838px;height:21px;background:#0078d7"></div>
<div class="t" style="left:266px;top:129px;color:#fff">1</div>
<div class="t" style="left:305px;top:129px;color:#fff;letter-spacing:-0.6px">OPCUAServer@...</div>
<div class="t" style="left:405px;top:129px;color:#fff">NS4|String||var|...</div>
<div class="t" style="left:505px;top:129px;color:#fff">Distance</div>
<div class="t" style="left:605px;top:129px;color:#fff">800</div>
<div class="t" style="left:705px;top:129px;color:#fff">Double</div>
<div class="t" style="left:805px;top:129px;color:#fff">19:31:42.839</div>
<div class="t" style="left:905px;top:129px;color:#fff">19:31:42.839</div>
<div class="t" style="left:1005px;top:129px;color:#fff">Good</div>
<div class="a" style="left:263px;top:145px;width:838px;height:21px;background:#f5f5f5"></div>
<div class="t" style="left:266px;top:150px;color:#000">2</div>
<div class="t" style="left:305px;top:150px;color:#000;letter-spacing:-0.6px">OPCUAServer@...</div>
<div class="t" style="left:405px;top:150px;color:#000">NS4|String||var|...</div>
<div class="t" style="left:505px;top:150px;color:#000">Velocity</div>
<div class="t" style="left:605px;top:150px;color:#000">700</div>
<div class="t" style="left:705px;top:150px;color:#000">Double</div>
<div class="t" style="left:805px;top:150px;color:#000">19:26:08.037</div>
<div class="t" style="left:905px;top:150px;color:#000">19:26:08.037</div>
<div class="t" style="left:1005px;top:150px;color:#000">Good</div>
<div class="t" style="left:266px;top:171px;color:#000">3</div>
<div class="t" style="left:305px;top:171px;color:#000;letter-spacing:-0.6px">OPCUAServer@...</div>
<div class="t" style="left:405px;top:171px;color:#000">NS4|String||var|...</div>
<div class="t" style="left:505px;top:171px;color:#000">start</div>
<div class="t" style="left:605px;top:171px;color:#000">true</div>
<div class="t" style="left:705px;top:171px;color:#000">Boolean</div>
<div class="t" style="left:805px;top:171px;color:#000">19:34:18.237</div>
<div class="t" style="left:905px;top:171px;color:#000">19:34:18.237</div>
<div class="t" style="left:1005px;top:171px;color:#000">Good</div>
<div class="a" style="left:263px;top:187px;width:838px;height:21px;background:#f5f5f5"></div>
<div class="t" style="left:266px;top:192px;color:#000">4</div>
<div class="t" style="left:305px;top:192px;color:#000;letter-spacing:-0.6px">OPCUAServer@...</div>
<div class="t" style="left:405px;top:192px;color:#000">NS4|String||var|...</div>
<div class="t" style="left:505px;top:192px;color:#000">emergency_stop</div>
<div class="t" style="left:605px;top:192px;color:#000">false</div>
<div class="t" style="left:705px;top:192px;color:#000">Boolean</div>
<div class="t" style="left:805px;top:192px;color:#000">19:21:43.436</div>
<div class="t" style="left:905px;top:192px;color:#000">19:21:43.436</div>
<div class="t" style="left:1005px;top:192px;color:#000">Good</div>
<div class="t" style="left:266px;top:213px;color:#000">5</div>
<div class="t" style="left:305px;top:213px;color:#000;letter-spacing:-0.6px">OPCUAServer@...</div>
<div class="t" style="left:405px;top:213px;color:#000">NS4|String||var|...</div>
<div class="t" style="left:505px;top:213px;color:#000">stop</div>
<div class="t" style="left:605px;top:213px;color:#000">false</div>
<div class="t" style="left:705px;top:213px;color:#000">Boolean</div>
<div class="t" style="left:805px;top:213px;color:#000">19:25:32.637</div>
<div class="t" style="left:905px;top:213px;color:#000">19:25:32.637</div>
<div class="t" style="left:1005px;top:213px;color:#000">Good</div>
<div class="a" style="left:603px;top:124px;width:98px;height:21px;border:1px dotted #f39a3c"></div>
<div class="a" style="left:600px;top:125px;width:94px;height:19px;border:3px solid #ff2a00"></div>
<div class="a" style="left:263px;top:588px;width:838px;height:16px;background:#f0f0f0"></div>
<div class="a" style="left:280px;top:589px;width:803px;height:14px;background:#cdcdcd"></div>
<svg class="a" style="left:268px;top:592px;" width="7" height="7" viewBox="0 0 7 7"><path d="M3.8 0L0.3 3.5L3.8 7H6L2.5 3.5L6 0Z" fill="#5a5a5a"/></svg>
<svg class="a" style="left:1089px;top:592px;" width="7" height="7" viewBox="0 0 7 7"><path d="M2.2 0L5.7 3.5L2.2 7H0L3.5 3.5L0 0Z" fill="#5a5a5a"/></svg>
<div class="a" style="left:1104px;top:78px;width:6px;height:530px;background:#f0f0f0"></div>
<div class="a" style="left:1110px;top:79px;width:256px;height:19px;background:#d9d9d9;border:1px solid #bababa"></div>
<div class="t" style="left:1115px;top:84px;">Attributes</div>
<svg class="a" style="left:1329px;top:84px;" width="9" height="10" viewBox="0 0 9 10"><rect x="2.5" y="0.5" width="6" height="6" fill="#fff" stroke="#1a1a1a"/><rect x="2.5" y="0.5" width="6" height="1.6" fill="#1a1a1a"/><rect x="0.5" y="3.5" width="6" height="6" fill="#fff" stroke="#1a1a1a"/><rect x="0.5" y="3.5" width="6" height="1.6" fill="#1a1a1a"/></svg>
<svg class="a" style="left:1350px;top:85px;" width="9" height="9" viewBox="0 0 9 9"><path d="M1 1L8 8M8 1L1 8" stroke="#222" stroke-width="1.7"/></svg>
<svg class="a" style="left:1112px;top:104px;" width="18" height="14" viewBox="0 0 18 14"><path d="M12.2 1.6H7L3.8 5.4M5.7 12.2H10.6L14 8.2" fill="none" stroke="#ff5f0a" stroke-width="1.9" stroke-linecap="round" stroke-linejoin="round"/><path d="M0.8 6.3H7.2L4.1 9.6Z M10.7 7.6H17.1L14 4.2Z" fill="#ff5f0a" stroke="#ff5f0a" stroke-width="0.8" stroke-linejoin="round"/></svg>
<div class="a" style="left:1133px;top:100px;width:23px;height:21px;background:#c6def4;border:1px solid #90c6f2"></div>
<svg class="a" style="left:1138px;top:107px;" width="15" height="11" viewBox="0 0 15 11"><defs><linearGradient id="ck" x1="0" y1="0" x2="0" y2="1"><stop offset="0" stop-color="#d8f090"/><stop offset="1" stop-color="#98c838"/></linearGradient></defs><path d="M1 3.8Q2.3 2.6 3.8 4L5.4 5.6L13.2 0.8Q14.3 1 13.9 1.9L6 9.3Q5.1 10.2 4.2 9.3Z" fill="url(#ck)" stroke="#6c9c22" stroke-width="0.9" stroke-linejoin="round"/></svg>
<svg class="a" style="left:1158px;top:101px;" width="18" height="19" viewBox="0 0 18 19"><path d="M5 4H7.5V8.5H9.5V12H12.5V16H15M5 4V13.5H7.5V17H9.5" fill="#fff" stroke="none"/><path d="M4.5 3V14M4.5 3.5H7.5V8.5H9.5V12H12.5V16.5H15M9.5 9.5H11.5M12.5 13.5H15M4.5 13.5H7.5V17H9.5M7.5 14.5H9.5" fill="none" stroke="#111" stroke-width="1.1"/></svg>
<svg class="a" style="left:1183px;top:103px;" width="15" height="15" viewBox="0 0 15 15"><circle cx="7.5" cy="7.5" r="6.3" fill="none" stroke="#2a9a5a" stroke-width="1.2"/><circle cx="7.5" cy="7.5" r="4" fill="none" stroke="#2a9a5a" stroke-width="1"/><circle cx="7.5" cy="7.5" r="2.2" fill="#1a6a2a"/></svg>
<svg class="a" style="left:1347px;top:104px;" width="15" height="15" viewBox="0 0 15 15"><circle cx="7.5" cy="7.5" r="7" fill="#3a3a3a"/><path d="M7.5 3.5V11.5M3.5 7.5H11.5" stroke="#fff" stroke-width="2.2"/></svg>
<div class="a" style="left:1110px;top:122px;width:256px;height:221px;background:#fff;border:1px solid #828790"></div>
<div class="a" style="left:1247px;top:123px;width:1px;height:23px;background:#e5e5e5"></div>
<div class="t" style="left:1114px;top:130px;">Attribute</div>
<div class="t" style="left:1250px;top:130px;">Value</div>
<div class="a" style="left:1111px;top:146px;width:238px;height:180px;overflow:hidden">
<div class="t" style="left:22px;top:3px;color:#000">NodeClass</div>
<div class="t" style="left:139px;top:3px;color:#000">Object</div>
<div class="a" style="left:20px;top:17px;width:218px;height:17px;background:#f5f5f5"></div>
<div class="t" style="left:22px;top:20px;color:#000">BrowseName</div>
<div class="t" style="left:139px;top:20px;color:#000">4, "GVL"</div>
<div class="t" style="left:22px;top:37px;color:#000">DisplayName</div>
<div class="t" style="left:139px;top:37px;color:#000">"en-Us", "GVL"</div>
<div class="a" style="left:20px;top:51px;width:218px;height:17px;background:#f5f5f5"></div>
<div class="t" style="left:22px;top:54px;color:#a0a0a0">Description</div>
<div class="t" style="left:139px;top:54px;color:#a0a0a0">BadAttributeIdInvalid</div>
<div class="t" style="left:22px;top:71px;color:#000">EventNotifier</div>
<div class="t" style="left:139px;top:71px;color:#000">None</div>
<div class="a" style="left:20px;top:85px;width:218px;height:17px;background:#f5f5f5"></div>
<div class="t" style="left:22px;top:88px;color:#a0a0a0">WriteMask</div>
<div class="t" style="left:139px;top:88px;color:#a0a0a0">BadAttributeIdInvalid</div>
<div class="t" style="left:22px;top:105px;color:#a0a0a0">UserWriteMask</div>
<div class="t" style="left:139px;top:105px;color:#a0a0a0">BadAttributeIdInvalid</div>
<div class="a" style="left:20px;top:119px;width:218px;height:17px;background:#f5f5f5"></div>
<div class="t" style="left:22px;top:122px;color:#a0a0a0">RolePermissions</div>
<div class="t" style="left:139px;top:122px;color:#a0a0a0">BadAttributeIdInvalid</div>
<div class="t" style="left:22px;top:139px;color:#a0a0a0">UserRolePermissions</div>
<div class="t" style="left:139px;top:139px;color:#a0a0a0">BadAttributeIdInvalid</div>
<div class="a" style="left:20px;top:153px;width:218px;height:17px;background:#f5f5f5"></div>
<div class="t" style="left:22px;top:156px;color:#a0a0a0">AccessRestrictions</div>
<div class="t" style="left:139px;top:156px;color:#a0a0a0">BadAttributeIdInvalid</div>
</div>
<div class="a" style="left:1349px;top:123px;width:16px;height:203px;background:#f0f0f0"></div>
<div class="a" style="left:1350px;top:188px;width:14px;height:120px;background:#cdcdcd"></div>
<svg class="a" style="left:1353px;top:129px;" width="7" height="7" viewBox="0 0 7 7"><path d="M0 3.7L3.5 0.2L7 3.7V5.8L3.5 2.3L0 5.8Z" fill="#5a5a5a"/></svg>
<svg class="a" style="left:1353px;top:314px;" width="7" height="7" viewBox="0 0 7 7"><path d="M0 0.2L3.5 3.7L7 0.2V2.3L3.5 5.8L0 2.3Z" fill="#5a5a5a"/></svg>
<div class="a" style="left:1111px;top:326px;width:238px;height:16px;background:#f0f0f0"></div>
<div class="a" style="left:1128px;top:327px;width:107px;height:14px;background:#cdcdcd"></div>
<svg class="a" style="left:1116px;top:330px;" width="7" height="7" viewBox="0 0 7 7"><path d="M3.8 0L0.3 3.5L3.8 7H6L2.5 3.5L6 0Z" fill="#5a5a5a"/></svg>
<svg class="a" style="left:1337px;top:330px;" width="7" height="7" viewBox="0 0 7 7"><path d="M2.2 0L5.7 3.5L2.2 7H0L3.5 3.5L0 0Z" fill="#5a5a5a"/></svg>
<div class="a" style="left:1349px;top:326px;width:16px;height:16px;background:#fff"></div>
<div class="a" style="left:1110px;top:348px;width:256px;height:19px;background:#d9d9d9;border:1px solid #bababa"></div>
<div class="t" style="left:1115px;top:353px;">References</div>
<svg class="a" style="left:1329px;top:353px;" width="9" height="10" viewBox="0 0 9 10"><rect x="2.5" y="0.5" width="6" height="6" fill="#fff" stroke="#1a1a1a"/><rect x="2.5" y="0.5" width="6" height="1.6" fill="#1a1a1a"/><rect x="0.5" y="3.5" width="6" height="6" fill="#fff" stroke="#1a1a1a"/><rect x="0.5" y="3.5" width="6" height="1.6" fill="#1a1a1a"/></svg>
<svg class="a" style="left:1350px;top:354px;" width="9" height="9" viewBox="0 0 9 9"><path d="M1 1L8 8M8 1L1 8" stroke="#222" stroke-width="1.7"/></svg>
<svg class="a" style="left:1112px;top:373px;" width="18" height="14" viewBox="0 0 18 14"><path d="M12.2 1.6H7L3.8 5.4M5.7 12.2H10.6L14 8.2" fill="none" stroke="#ff5f0a" stroke-width="1.9" stroke-linecap="round" stroke-linejoin="round"/><path d="M0.8 6.3H7.2L4.1 9.6Z M10.7 7.6H17.1L14 4.2Z" fill="#ff5f0a" stroke="#ff5f0a" stroke-width="0.8" stroke-linejoin="round"/></svg>
<div class="a" style="left:1133px;top:369px;width:23px;height:21px;background:#c6def4;border:1px solid #90c6f2"></div>
<div class="a" style="left:1156px;top:369px;width:23px;height:21px;background:#c6def4;border:1px solid #90c6f2"></div>
<div class="a" style="left:1179px;top:369px;width:23px;height:21px;background:#c6def4;border:1px solid #90c6f2"></div>
<svg class="a" style="left:1138px;top:377px;" width="15" height="11" viewBox="0 0 15 11"><defs><linearGradient id="ck" x1="0" y1="0" x2="0" y2="1"><stop offset="0" stop-color="#d8f090"/><stop offset="1" stop-color="#98c838"/></linearGradient></defs><path d="M1 3.8Q2.3 2.6 3.8 4L5.4 5.6L13.2 0.8Q14.3 1 13.9 1.9L6 9.3Q5.1 10.2 4.2 9.3Z" fill="url(#ck)" stroke="#6c9c22" stroke-width="0.9" stroke-linejoin="round"/></svg>
<svg class="a" style="left:1161px;top:375px;" width="16" height="13" viewBox="0 0 16 13"><rect x="6" y="0.5" width="4" height="3" fill="#ff6a00" stroke="#111" stroke-width="0.8"/><path d="M8.5 3.5V6.5M2.5 6.5H13.5M2.5 6.5V9M8.5 6.5V9M13.5 6.5V9" fill="none" stroke="#111" stroke-width="1"/><rect x="0.5" y="9" width="4" height="3.5" fill="#0c0" stroke="#111" stroke-width="0.8"/><rect x="6" y="9" width="4" height="3.5" fill="#0c0" stroke="#111" stroke-width="0.8"/><rect x="11.5" y="9" width="4" height="3.5" fill="#0c0" stroke="#111" stroke-width="0.8"/></svg>
<svg class="a" style="left:1183px;top:373px;" width="15" height="15" viewBox="0 0 15 15"><path d="M7.5 1.5L13.5 7.5L7.5 13.5L1.5 7.5Z" fill="none" stroke="#000" stroke-width="0.9" stroke-dasharray="1.2 0.6"/><path d="M7.5 3V12M3 7.5H12" stroke="#000" stroke-width="1"/><rect x="5.5" y="0.5" width="4" height="2.5" fill="#0c0" stroke="#000"/><rect x="5.5" y="12" width="4" height="2.5" fill="#0c0" stroke="#000"/><rect x="0.5" y="5.5" width="2.5" height="4" fill="#0c0" stroke="#000"/><rect x="12" y="5.5" width="2.5" height="4" fill="#0c0" stroke="#000"/><rect x="5.5" y="5.5" width="4" height="4" fill="#ff6a00" stroke="#000"/></svg>
<div class="a" style="left:1202px;top:370px;width:66px;height:20px;background:#e1e1e1;border:1px solid #adadad"></div>
<div class="t" style="left:1205px;top:376px;">Forward</div>
<svg class="a" style="left:1254px;top:379px;" width="10" height="6" viewBox="0 0 10 6"><path d="M0.5 0.5L5 5L9.5 0.5" fill="none" stroke="#333" stroke-width="1"/></svg>
<svg class="a" style="left:1347px;top:373px;" width="15" height="15" viewBox="0 0 15 15"><circle cx="7.5" cy="7.5" r="7" fill="#3a3a3a"/><path d="M7.5 3.5V11.5M3.5 7.5H11.5" stroke="#fff" stroke-width="2.2"/></svg>
<div class="a" style="left:1110px;top:391px;width:256px;height:218px;background:#fff;border:1px solid #828790"></div>
<div class="a" style="left:1210px;top:392px;width:1px;height:23px;background:#e5e5e5"></div>
<div class="t" style="left:1114px;top:399px;">Reference</div>
<div class="t" style="left:1215px;top:399px;">Target DisplayName</div>
<div class="t" style="left:1114px;top:418px;">HasComponent</div>
<div class="t" style="left:1214px;top:418px;">Distance</div>
<div class="a" style="left:1111px;top:432px;width:254px;height:17px;background:#f5f5f5"></div>
<div class="t" style="left:1114px;top:435px;">HasComponent</div>
<div class="t" style="left:1214px;top:435px;">emergency_stop</div>
<div class="t" style="left:1114px;top:452px;">HasComponent</div>
<div class="t" style="left:1214px;top:452px;">start</div>
<div class="a" style="left:1111px;top:466px;width:254px;height:17px;background:#f5f5f5"></div>
<div class="t" style="left:1114px;top:469px;">HasComponent</div>
<div class="t" style="left:1214px;top:469px;">stop</div>
<div class="t" style="left:1114px;top:486px;">HasComponent</div>
<div class="t" style="left:1214px;top:486px;">Velocity</div>
<div class="a" style="left:1111px;top:500px;width:254px;height:17px;background:#f5f5f5"></div>
<div class="t" style="left:1114px;top:503px;">HasTypeDefiniti...</div>
<div class="t" style="left:1214px;top:503px;">FolderType</div>
<div class="a" style="left:0px;top:609px;width:1366px;height:5px;background:#f0f0f0"></div>
<div class="a" style="left:0px;top:614px;width:1366px;height:19px;background:#d9d9d9;border:1px solid #bababa"></div>
<div class="t" style="left:5px;top:619px;">Log</div>
<svg class="a" style="left:1329px;top:619px;" width="9" height="10" viewBox="0 0 9 10"><rect x="2.5" y="0.5" width="6" height="6" fill="#fff" stroke="#1a1a1a"/><rect x="2.5" y="0.5" width="6" height="1.6" fill="#1a1a1a"/><rect x="0.5" y="3.5" width="6" height="6" fill="#fff" stroke="#1a1a1a"/><rect x="0.5" y="3.5" width="6" height="1.6" fill="#1a1a1a"/></svg>
<svg class="a" style="left:1350px;top:620px;" width="9" height="9" viewBox="0 0 9 9"><path d="M1 1L8 8M8 1L1 8" stroke="#222" stroke-width="1.7"/></svg>
<div class="a" style="left:0px;top:633px;width:1366px;height:24px;background:#f0f0f0"></div>
<svg class="a" style="left:4px;top:638px;" width="15" height="15" viewBox="0 0 15 15"><path d="M1.5 4L4 1.5L7.5 5L11 1.5L13.5 4L10 7.5L13.5 11L11 13.5L7.5 10L4 13.5L1.5 11L5 7.5Z" fill="#f03040" stroke="#b01020" stroke-width="0.8" stroke-linejoin="round"/></svg>
<svg class="a" style="left:27px;top:637px;" width="15" height="16" viewBox="0 0 15 16"><path d="M1 1H13L14 2V14L13 15H1Z" fill="#90a8d8" stroke="#5a6a9a" stroke-width="1"/><rect x="3.5" y="1.5" width="8" height="5" fill="#e8e8ee"/><rect x="3.5" y="9" width="8" height="6" fill="#d8d8e0"/><rect x="4.5" y="10" width="2" height="4" fill="#777"/></svg>
<div class="a" style="left:0px;top:657px;width:1366px;height:71px;background:#fff;border:1px solid #828790;border-bottom:none"></div>
<div class="a" style="left:1px;top:658px;width:1348px;height:69px;overflow:hidden">
<div class="a" style="left:0px;top:18px;width:1348px;height:17px;background:#f5f5f5"></div>
<div class="t" style="left:3px;top:21px;">25/01/2026 19:2...</div>
<div class="t" style="left:103px;top:21px;">Attribute Plugin</div>
<div class="t" style="left:203px;top:21px;letter-spacing:-0.6px">OPCUAServer@...</div>
<div class="t" style="left:303px;top:21px;letter-spacing:-0.15px">Read attributes of node 'NS4|String||var|CODESYS Control Win V3 x64.Application.GVL' succeeded [ret = Good].</div>
<div class="t" style="left:3px;top:38px;">25/01/2026 19:2...</div>
<div class="t" style="left:103px;top:38px;">Reference Plugin</div>
<div class="t" style="left:203px;top:38px;letter-spacing:-0.6px">OPCUAServer@...</div>
<div class="t" style="left:303px;top:38px;letter-spacing:-0.15px">Browse succeeded.</div>
<div class="a" style="left:0px;top:52px;width:1348px;height:17px;background:#f5f5f5"></div>
<div class="t" style="left:3px;top:55px;">25/01/2026 19:3...</div>
<div class="t" style="left:103px;top:55px;">DA Plugin</div>
<div class="t" style="left:203px;top:55px;letter-spacing:-0.6px">OPCUAServer@...</div>
<div class="t" style="left:303px;top:55px;letter-spacing:-0.15px">Write to node 'NS4|String||var|CODESYS Control Win V3 x64.Application.GVL.Distance' succeeded [ret = Good]</div>
<div class="a" style="left:0px;top:0px;width:1348px;height:23px;background:#fff"></div>
<div class="a" style="left:99px;top:0px;width:1px;height:23px;background:#e5e5e5"></div>
<div class="a" style="left:199px;top:0px;width:1px;height:23px;background:#e5e5e5"></div>
<div class="a" style="left:299px;top:0px;width:1px;height:23px;background:#e5e5e5"></div>
<div class="a" style="left:1346px;top:0px;width:1px;height:23px;background:#e5e5e5"></div>
<div class="t" style="left:3px;top:7px;">Timestamp</div>
<div class="t" style="left:103px;top:7px;">Source</div>
<div class="t" style="left:203px;top:7px;">Server</div>
<div class="t" style="left:303px;top:7px;">Message</div>
</div>
<div class="a" style="left:1349px;top:658px;width:16px;height:69px;background:#f0f0f0"></div>
<div class="a" style="left:1350px;top:692px;width:14px;height:17px;background:#cdcdcd"></div>
<svg class="a" style="left:1353px;top:664px;" width="7" height="7" viewBox="0 0 7 7"><path d="M0 3.7L3.5 0.2L7 3.7V5.8L3.5 2.3L0 5.8Z" fill="#5a5a5a"/></svg>
<svg class="a" style="left:1353px;top:715px;" width="7" height="7" viewBox="0 0 7 7"><path d="M0 0.2L3.5 3.7L7 0.2V2.3L3.5 5.8L0 2.3Z" fill="#5a5a5a"/></svg>
<div class="a" style="left:0px;top:727px;width:1366px;height:1px;background:#d8d8d8"></div>
<div class="a" style="left:0px;top:728px;width:1366px;height:2px;background:#1c2630"></div>
</body></html>
